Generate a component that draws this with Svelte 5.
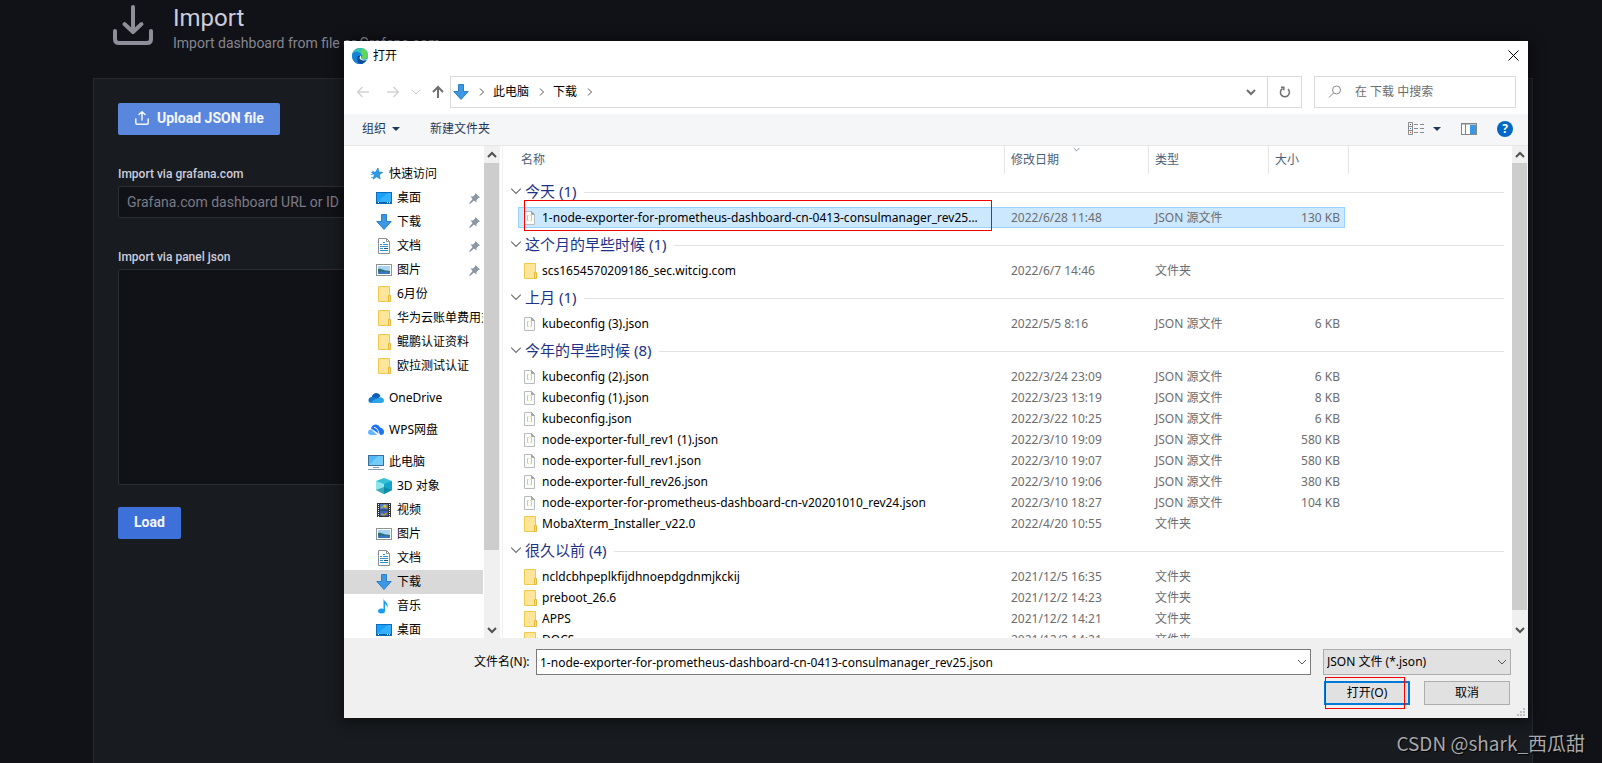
<script>

let jsonType   = "JSON 源文件";
let folderType = "文件夹";

let fileName = "1-node-exporter-for-prometheus-dashboard-cn-0413-consulmanager_rev25.json";
let gnetId   = "";
let panel    = "";
let search   = "";

let tree = [
    {
        "label": "快速访问",
        "icon": "star",
        "items": [
            { "label": "桌面", "icon": "desktop", "pinned": true },
            { "label": "下载", "icon": "download", "pinned": true },
            { "label": "文档", "icon": "document", "pinned": true },
            { "label": "图片", "icon": "picture", "pinned": true },
            { "label": "6月份", "icon": "folder" },
            { "label": "华为云账单费用对比", "icon": "folder" },
            { "label": "鲲鹏认证资料", "icon": "folder" },
            { "label": "欧拉测试认证", "icon": "folder" }
        ]
    },
    { "label": "OneDrive", "icon": "onedrive", "items": [] },
    { "label": "WPS网盘", "icon": "wps", "items": [] },
    {
        "label": "此电脑",
        "icon": "computer",
        "items": [
            { "label": "3D 对象", "icon": "cube" },
            { "label": "视频", "icon": "video" },
            { "label": "图片", "icon": "picture" },
            { "label": "文档", "icon": "document" },
            { "label": "下载", "icon": "download", "selected": true },
            { "label": "音乐", "icon": "music" },
            { "label": "桌面", "icon": "desktop" }
        ]
    }
];

let groups = [
    {
        "label": "今天 (1)",
        "files": [
            {
                "name": "1-node-exporter-for-prometheus-dashboard-cn-0413-consulmanager_rev25...",
                "date": "2022/6/28 11:48",
                "size": "130 KB",
                "selected": true
            }
        ]
    },
    {
        "label": "这个月的早些时候 (1)",
        "files": [
            { "name": "scs1654570209186_sec.witcig.com", "date": "2022/6/7 14:46" }
        ]
    },
    {
        "label": "上月 (1)",
        "files": [
            { "name": "kubeconfig (3).json", "date": "2022/5/5 8:16", "size": "6 KB" }
        ]
    },
    {
        "label": "今年的早些时候 (8)",
        "files": [
            { "name": "kubeconfig (2).json", "date": "2022/3/24 23:09", "size": "6 KB" },
            { "name": "kubeconfig (1).json", "date": "2022/3/23 13:19", "size": "8 KB" },
            { "name": "kubeconfig.json", "date": "2022/3/22 10:25", "size": "6 KB" },
            { "name": "node-exporter-full_rev1 (1).json", "date": "2022/3/10 19:09", "size": "580 KB" },
            { "name": "node-exporter-full_rev1.json", "date": "2022/3/10 19:07", "size": "580 KB" },
            { "name": "node-exporter-full_rev26.json", "date": "2022/3/10 19:06", "size": "380 KB" },
            { "name": "node-exporter-for-prometheus-dashboard-cn-v20201010_rev24.json", "date": "2022/3/10 18:27", "size": "104 KB" },
            { "name": "MobaXterm_Installer_v22.0", "date": "2022/4/20 10:55" }
        ]
    },
    {
        "label": "很久以前 (4)",
        "files": [
            { "name": "ncldcbhpeplkfijdhnoepdgdnmjkckij", "date": "2021/12/5 16:35" },
            { "name": "preboot_26.6", "date": "2021/12/2 14:23" },
            { "name": "APPS", "date": "2021/12/2 14:21" },
            { "name": "DOCS", "date": "2021/12/2 14:21" }
        ]
    }
];

</script>

{#snippet icon(name)}
    <svg class="icon" width="16" height="16" viewBox="0 0 16 16" fill="none" aria-hidden="true">
        {#if name === "star"}
            <path d="M10 2l.8 4 4 .3-3.4 2.400.8 4.300-3.400-2.200-3.800 2.400 1.400-4.400L3.400 6.400l4.300-.3z" fill="#2b9be8" stroke="#1379c4" stroke-width=".6"/>
            <path d="M4 5.5h2M2.500 8.5h3M3 11.5h2" stroke="#5bb8f2"/>
        {:else if name === "desktop"}
            <rect x=".5" y="2.5" width="15" height="11" fill="#18a0fb" stroke="#0a6cbd"/>
            <path d="M1 12L12 3h3v9z" fill="#35b0ff"/>
            <path d="M1 12.5h14" stroke="#0b5f9f"/>
            <path d="M2 12.5h1M11 12.5h1M13 12.5h1" stroke="#fff"/>
        {:else if name === "download"}
            <path d="M5.5.5h5v7h4.700L8 15.5.8 7.5h4.700z" fill="#3c98e4" stroke="#2b7fcc"/>
        {:else if name === "document"}
            <path d="M2.500.5h8l3 3v12h-11z" fill="#fff" stroke="#8b8f94"/>
            <path d="M10.5.5v3h3" stroke="#8b8f94"/>
            <path d="M7 4.5h2M4 6.5h2M7 6.5h5M4 8.5h8M4 10.5h3M4 12.5h8" stroke="#2d8fd0"/>
            <path d="M8 10.5h4" stroke="#30506a"/>
        {:else if name === "picture"}
            <rect x=".5" y="2.5" width="15" height="11" fill="#fff" stroke="#8f9398"/>
            <rect x="2" y="4" width="12" height="8" fill="#a9d4f5"/>
            <path d="M2 7c3-1 5 2 12 2v3H2z" fill="#2f6f78"/>
            <path d="M2 10c4-1 8 0 12 0v2H2z" fill="#3877b8"/>
        {:else if name === "folder"}
            <path d="M2.500.5h11v15h-11z" fill="#ffe59a" stroke="#efc94c"/>
            <path d="M12.500 9.500h2v6h-2z" fill="#ffe08a" stroke="#e5b93a"/>
        {:else if name === "onedrive"}
            <path d="M4 9a4.500 4.500 0 0 1 8.500-3L9 10z" fill="#0f5fb4"/>
            <path d="M3 13a3 3 0 0 1 1-6c2-.5 4 1 7 3l-5 3z" fill="#1479cf"/>
            <path d="M3 13c2-4 5-4 7-5 3-2 6 0 6 2.500 0 1.500-1 2.500-3 2.500z" fill="#2aa5ea"/>
        {:else if name === "wps"}
            <path d="M3 6.500C4 2 10 1 12 5.500 15 6 16 8 16 10s-1 3-3 3z" fill="#1d74f5"/>
            <path d="M0 10.500C0 8 2 7 3.500 7.500L9 13H3c-2 0-3-1-3-2.500z" fill="#67b7ff"/>
            <path d="M6 5.500c3 0 5 4 5 7.500" stroke="#fff"/>
        {:else if name === "computer"}
            <rect x=".5" y="1.5" width="15" height="10" fill="#4db8f5" stroke="#3d6f96"/>
            <path d="M1 11l9-9h5v9z" fill="#74ccfa"/>
            <path d="M5 13.5h6M0 15.5h16" stroke="#8b9db3"/>
        {:else if name === "cube"}
            <path d="M8 0l8 3v9l-8 4-8-4V3z" fill="#35c0d6"/>
            <path d="M0 3l8 3v10l-8-4z" fill="#8fe5ee"/>
            <path d="M8 6l8-3v9l-8 4z" fill="#12a4cb"/>
            <path d="M0 12l8-3 8 3-8 4z" fill="#087f92" opacity=".6"/>
        {:else if name === "video"}
            <rect x="1" y="1" width="14" height="14" fill="#333"/>
            <rect x="4" y="2" width="8" height="5.5" fill="#467ed0"/>
            <rect x="4" y="8.5" width="8" height="5.5" fill="#3769c0"/>
            <path d="M2.500 2v13M13.500 2v13" stroke="#fff" stroke-dasharray="1 1"/>
            <path d="M5 6l3-2 3 2M5 12l3 1 3-2" stroke="#d19a30" stroke-width="1.5"/>
            <circle cx="9" cy="4" r="1.5" fill="#e8c537"/>
        {:else if name === "music"}
            <path d="M7.500 0c0 4 5.500 4 4 10-.5-2-1.500-3.500-2.500-4v7H7.500z" fill="#1a9cf0"/>
            <ellipse cx="5.500" cy="13" rx="3.500" ry="2.500" fill="#1a9cf0"/>
        {:else if name === "json"}
            <path d="M2.500 1.500h7l3 3v10h-10z" fill="#fafbfb" stroke="#b9bcbf"/>
            <path d="M9.500 1.500v3h3z" fill="#a3a7ab" stroke="#a3a7ab"/>
            <path d="M6.500 5.500h-1v5h1M8.500 5.500h1v5h-1" stroke="#d0d07a"/>
        {/if}
    </svg>
{/snippet}

{#snippet chevron(dir)}
    <svg class="chevron {dir}" width="10" height="10" viewBox="0 0 10 10" fill="none" stroke="currentColor" aria-hidden="true">
        {#if dir === "right"}
            <path d="M3 1.500L6.500 5 3 8.500"/>
        {:else if dir === "up"}
            <path d="M1 7l4-4 4 4"/>
        {:else}
            <path d="M1 3l4 4 4-4"/>
        {/if}
    </svg>
{/snippet}

{#snippet scrollbar(name)}
    <div class="scrollbar {name}">
        <button type="button" aria-label="向上滚动">{@render chevron("up")}</button>
        <div class="track"><div class="thumb"></div></div>
        <button type="button" aria-label="向下滚动">{@render chevron("down")}</button>
    </div>
{/snippet}

<div class="page">
    <main>
        <header class="page-header">
            <svg width="40" height="40" viewBox="0 0 40 40" fill="none" stroke="#8e8e99" stroke-width="4" stroke-linecap="round" stroke-linejoin="round" aria-hidden="true">
                <path d="M20 2v24M11.500 19L20 27l8.500-8M2 26v8q0 4 4 4h28q4 0 4-4v-8"/>
            </svg>
            <div>
                <h1>Import</h1>
                <p>Import dashboard from file or Grafana.com</p>
            </div>
        </header>

        <section class="panel">
            <button type="button" class="primary upload">
                <svg width="16" height="16" viewBox="0 0 16 16" fill="none" stroke="currentColor" stroke-width="1.5" stroke-linecap="round" stroke-linejoin="round" aria-hidden="true">
                    <path d="M8 10V2M5 4.500L8 1.800l3 2.700M1.800 9v4q0 1.200 1.200 1.200h10q1.200 0 1.200-1.200V9"/>
                </svg>
                Upload JSON file
            </button>

            <label for="gnet">Import via grafana.com</label>
            <input id="gnet" type="text" placeholder="Grafana.com dashboard URL or ID" bind:value={gnetId}>

            <label for="panel-json">Import via panel json</label>
            <textarea id="panel-json" bind:value={panel}></textarea>

            <button type="button" class="primary">Load</button>
        </section>
    </main>

    <div class="dialog" role="dialog" aria-labelledby="dialog-title">
        <div class="titlebar">
            <svg width="16" height="16" viewBox="0 0 16 16" aria-hidden="true">
                <circle cx="8" cy="8" r="8" fill="#1b8fdc"/>
                <path d="M.3 6C1.500 2 5 0 8 0c5 0 8 3.500 8 7 0 3-2 4.300-4.500 4.300-2 0-2.500-.8-2-1.500C10.500 8 9.500 5 6 5 3.500 5 1.300 5.500.3 6z" fill="#35c2b4"/>
                <path d="M10 .3c3.500.7 6 3.500 6 6.700 0 3-2 4.300-4.500 4.300-2 0-2.500-.8-2-1.500 1.500-2 1-4-1-5z" fill="#5fd65a"/>
                <path d="M.3 6C2 3 8 3 9.500 7c.3 1 .2 2-.2 2.600C8 7 5 8 5 11c0 2.500 2 4.500 4.500 4.800C4 17-1 12 .3 6z" fill="#1583d8"/>
                <path d="M5 11c0-3 2-3.500 3-3-.5 3.500 3 5 6.500 3.800C13 14.500 11 16 9 16c-2 0-4-2.500-4-5z" fill="#0d4b94"/>
                <path d="M8.500 7.500c1.200 1.500 0 2.500 1 3.500 1.500 1.300 4 .8 5.500 0l-.6 1C11 13 8 12 7.500 10z" fill="#fff"/>
            </svg>
            <span id="dialog-title">打开</span>
            <button type="button" class="close" aria-label="关闭">
                <svg width="11" height="11" viewBox="0 0 11 11" stroke="#000" aria-hidden="true"><path d="M.5.5l10 10M10.500.5l-10 10"/></svg>
            </button>
        </div>

        <div class="navbar">
            <div class="history">
                <button type="button" aria-label="后退" disabled>
                    <svg width="14" height="14" viewBox="0 0 14 14" fill="none" stroke="#d3d3d3" stroke-width="1.5" aria-hidden="true"><path d="M13 7H2M6.500 2L1.500 7l5 5"/></svg>
                </button>
                <button type="button" aria-label="前进" disabled>
                    <svg width="14" height="14" viewBox="0 0 14 14" fill="none" stroke="#d3d3d3" stroke-width="1.5" aria-hidden="true"><path d="M1 7h11M7.500 2l5 5-5 5"/></svg>
                </button>
                <button type="button" class="recent" aria-label="最近的位置" disabled>{@render chevron("down")}</button>
                <button type="button" aria-label="上移">
                    <svg width="14" height="14" viewBox="0 0 14 14" fill="none" stroke="#6f6f6f" stroke-width="2" aria-hidden="true"><path d="M7 13V2M2 7l5-5 5 5"/></svg>
                </button>
            </div>
            <div class="address">
                {@render icon("download")}
                {@render chevron("right")}
                <button type="button">此电脑</button>
                {@render chevron("right")}
                <button type="button">下载</button>
                {@render chevron("right")}
                <button type="button" class="expand" aria-label="以前的位置">{@render chevron("down")}</button>
                <button type="button" class="refresh" aria-label="刷新">
                    <svg width="12" height="12" viewBox="0 0 12 12" fill="none" stroke="#6f6f6f" stroke-width="1.5" aria-hidden="true"><path d="M3.500 2.500A4.500 4.500 0 1 0 9 3M2 1.200h2.800v3"/></svg>
                </button>
            </div>
            <label class="search">
                <svg width="14" height="14" viewBox="0 0 14 14" fill="none" stroke="#8a8a8a" aria-hidden="true"><circle cx="8.500" cy="5" r="4"/><path d="M5.500 8L1 12.500"/></svg>
                <input type="text" aria-label="搜索" placeholder="在 下载 中搜索" bind:value={search}>
            </label>
        </div>

        <div class="toolbar">
            <button type="button">组织 <i class="caret"></i></button>
            <button type="button">新建文件夹</button>
            <button type="button" class="view" aria-label="更改视图">
                <svg width="17" height="14" viewBox="0 0 17 14" fill="none" aria-hidden="true">
                    <path d="M.5.5h4v12h-4zM.5 4.500h4M.5 8.500h4" stroke="#8d8d8d"/>
                    <path d="M2 2.500h1" stroke="#555"/><path d="M2 6.500h1" stroke="#2b83d6"/><path d="M2 10.500h1" stroke="#d33"/>
                    <path d="M6 2.500h4M12 2.500h4M6 6.500h4M12 6.500h4M6 10.500h4M12 10.500h4" stroke="#8d8d8d"/>
                </svg>
                <i class="caret"></i>
            </button>
            <button type="button" aria-label="显示预览窗格">
                <svg width="16" height="12" viewBox="0 0 16 12" fill="none" aria-hidden="true">
                    <rect x=".5" y=".5" width="15" height="11" fill="#fff" stroke="#80868c"/>
                    <path d="M4.500 1v10M0 1h16" stroke="#80868c"/>
                    <path d="M9 2h6v9H9z" fill="#3b97e3"/>
                </svg>
            </button>
            <button type="button" class="help" aria-label="获取帮助">?</button>
        </div>

        <div class="body">
            <nav>
                <ul>
                    {#each tree as node}
                        <li>
                            <a href="#top">{@render icon(node.icon)}{node.label}</a>
                            {#if node.items.length > 0}
                                <ul>
                                    {#each node.items as item}
                                        <li>
                                            <a href="#top" class:selected={item.selected}>
                                                {@render icon(item.icon)}<span>{item.label}</span>
                                                {#if item.pinned}
                                                    <svg class="pin" width="11" height="11" viewBox="0 0 11 11" aria-hidden="true"><path d="M6.500 0L11 4.500 9.500 5 7.500 7v2.500L5 7.500 1 11 0 10.500 3.500 6 1.500 3.500H4l2-2z" fill="#8996a3"/></svg>
                                                {/if}
                                            </a>
                                        </li>
                                    {/each}
                                </ul>
                            {/if}
                        </li>
                    {/each}
                </ul>
            </nav>
            {@render scrollbar("tree-scroll")}

            <div class="files">
                <table>
                    <colgroup>
                        <col class="col-gutter"><col><col class="col-date"><col class="col-type"><col class="col-size"><col class="col-rest">
                    </colgroup>
                    <thead>
                        <tr>
                            <td></td>
                            <th><div class="first">名称</div></th>
                            <th><div>修改日期<span class="sort">{@render chevron("down")}</span></div></th>
                            <th><div>类型</div></th>
                            <th><div>大小</div></th>
                            <td><div class="edge"></div></td>
                        </tr>
                    </thead>
                    {#each groups as group}
                        <tbody>
                            <tr class="group">
                                <th colspan="6"><div>{@render chevron("down")}<span>{group.label}</span></div></th>
                            </tr>
                            {#each group.files as file}
                                <tr class="file" class:selected={file.selected}>
                                    <td></td>
                                    <td class="name">
                                        <div>{@render icon(file.size ? "json" : "folder")}<span>{file.name}</span></div>
                                        {#if file.selected}<i class="mark"></i>{/if}
                                    </td>
                                    <td class="date">{file.date}</td>
                                    <td class="type">{file.size ? jsonType : folderType}</td>
                                    <td class="size">{file.size ?? ""}</td>
                                    <td></td>
                                </tr>
                            {/each}
                        </tbody>
                    {/each}
                </table>
            </div>
            {@render scrollbar("file-scroll")}
        </div>

        <div class="footer">
            <div class="fields">
                <label for="filename">文件名(N):</label>
                <div class="combo">
                    <input id="filename" type="text" bind:value={fileName}>
                    {@render chevron("down")}
                </div>
                <div class="combo filter">
                    <select aria-label="文件类型">
                        <option>JSON 文件 (*.json)</option>
                    </select>
                    {@render chevron("down")}
                </div>
            </div>
            <div class="actions">
                <div class="open">
                    <button type="button" class="default">打开(O)</button>
                    <i class="mark"></i>
                </div>
                <button type="button">取消</button>
            </div>
            <svg class="grip" width="8" height="8" viewBox="0 0 8 8" fill="#bfbfbf" aria-hidden="true">
                <path d="M6 0h2v2H6zM3 3h2v2H3zM6 3h2v2H6zM0 6h2v2H0zM3 6h2v2H3zM6 6h2v2H6z"/>
            </svg>
        </div>
    </div>

    <div class="watermark">CSDN @shark_西瓜甜</div>
</div>

<style>

:global(body) {
    margin: 0;
    background: #111217;
}

.page,
.page * {
    box-sizing: border-box;
}

.page {
    position: relative;
    height: 100vh;
    overflow: hidden;
    font-family: "Roboto", "Noto Sans CJK SC", sans-serif;
    color: #ccccdc;
    background: #111217;
}

button,
input,
select,
textarea {
    margin: 0;
    padding: 0;
    font: inherit;
    color: inherit;
    background: none;
    border: none;
    border-radius: 0;
    outline: none;
}

svg {
    display: block;
    flex: none;
}

main {
    display: flex;
    flex-direction: column;
    height: 100%;
    padding: 0 69px 0 93px;
}

.page-header {
    display: flex;
    gap: 20px;
    height: 78px;
    padding: 5px 20px 0;
}

h1 {
    margin: 0;
    font-size: 24px;
    font-weight: 400;
    line-height: 26px;
}

.page-header p {
    margin: 0;
    font-size: 14px;
    line-height: 24px;
    color: #85858f;
}

.panel {
    flex: 1;
    display: flex;
    flex-direction: column;
    align-items: flex-start;
    padding: 24px;
    background: #181b1f;
    border: 1px solid #25282d;
    border-bottom: none;
}

.panel label {
    margin-bottom: 4px;
    font-size: 12px;
    font-weight: 500;
    line-height: 16px;
}

.panel input,
.panel textarea {
    width: 100%;
    max-width: 600px;
    padding: 0 8px;
    font-size: 14px;
    background: #111217;
    border: 1px solid #2d2e34;
    border-radius: 2px;
}

.panel input {
    height: 32px;
    margin-bottom: 31px;
}

.panel input::placeholder {
    color: #7b7b86;
    opacity: 1;
}

.panel textarea {
    height: 216px;
    margin-bottom: 22px;
    resize: none;
}

.primary {
    height: 32px;
    padding: 0 16px 2px;
    display: flex;
    align-items: center;
    gap: 7px;
    font-size: 14px;
    font-weight: 700;
    color: #f4f6fc;
    background: #3d71d9;
    border-radius: 2px;
}

.upload {
    margin-bottom: 31px;
    background: #5a87de;
}

/* file dialog */

.dialog {
    position: absolute;
    top: 41px;
    right: 74px;
    bottom: 45px;
    left: 344px;
    display: flex;
    flex-direction: column;
    font-family: "Noto Sans", "Noto Sans CJK SC", sans-serif;
    font-size: 12px;
    line-height: 20px;
    color: #000000;
    background: #ffffff;
    box-shadow: 0 2px 12px 2px rgba(0, 0, 0, 0.5);
}

.titlebar {
    display: flex;
    align-items: center;
    gap: 5px;
    height: 28px;
    padding: 1px 9px 0 8px;
}

.close {
    margin-left: auto;
}

.navbar {
    display: flex;
    align-items: center;
    gap: 12px;
    height: 45px;
    padding: 0 12px;
}

.history {
    display: flex;
    align-items: center;
    width: 82px;
    gap: 16px;
}

.history .recent {
    margin: 0 -6px 0 -5px;
    color: #c8c8c8;
}

.address {
    flex: 1;
    display: flex;
    align-items: center;
    height: 32px;
    padding-left: 2px;
    border: 1px solid #d9d9d9;
}

.address .right {
    margin: 0 6px 0 8px;
    color: #555555;
}

.address .expand {
    margin: 0 11px 0 auto;
    color: #6f6f6f;
    stroke-width: 2;
}

.refresh {
    display: flex;
    align-items: center;
    justify-content: center;
    width: 34px;
    height: 100%;
    border-left: 1px solid #d9d9d9;
}

.search {
    display: flex;
    align-items: center;
    gap: 13px;
    width: 202px;
    height: 32px;
    padding: 0 13px;
    border: 1px solid #d9d9d9;
}

.search input {
    flex: 1;
    min-width: 0;
}

.search input::placeholder {
    color: #6d6d6d;
    opacity: 1;
}

.toolbar {
    display: flex;
    align-items: center;
    height: 32px;
    padding: 0 15px 1px 18px;
    gap: 20px;
    color: #1e395b;
    background: #f4f6f8;
    border-bottom: 1px solid #e5e6e8;
}

.toolbar button {
    display: flex;
    align-items: center;
    gap: 6px;
}

.toolbar button:first-child {
    margin-right: 10px;
}

.caret {
    border: 4px solid transparent;
    border-top-color: #1e395b;
    border-bottom: none;
}

.toolbar .view {
    gap: 8px;
    margin-left: auto;
}

.toolbar .help {
    justify-content: center;
    width: 16px;
    height: 16px;
    font-size: 12px;
    font-weight: 700;
    color: #ffffff;
    background: #0067c5;
    border-radius: 50%;
}

.body {
    flex: 1;
    display: flex;
    min-height: 0;
}

nav {
    width: 140px;
    padding-top: 16px;
    overflow: hidden;
}

nav ul {
    margin: 0;
    padding: 0;
    list-style: none;
}

nav > ul {
    display: flex;
    flex-direction: column;
    gap: 8px;
}

nav a {
    display: flex;
    align-items: center;
    gap: 5px;
    height: 24px;
    margin-right: 1px;
    padding-left: 24px;
    overflow: hidden;
    white-space: nowrap;
    color: #000000;
    text-decoration: none;
}

nav ul ul a {
    padding-left: 32px;
}

nav a.selected {
    background: #d9d9d9;
}

.pin {
    margin: 0 3px 0 auto;
}

.scrollbar {
    flex: none;
    display: flex;
    flex-direction: column;
    width: 16px;
    background: #f0f0f0;
}

.scrollbar button {
    display: flex;
    align-items: center;
    justify-content: center;
    width: 15px;
    height: 17px;
    color: #505050;
    stroke-width: 2;
}

.track {
    flex: 1;
}

.thumb {
    width: 15px;
    background: #cdcdcd;
}

.tree-scroll .thumb {
    height: 84.5%;
}

.file-scroll .thumb {
    height: 97.6%;
}

.files {
    flex: 1;
    min-width: 0;
    margin-left: 2px;
    overflow: hidden;
    border-left: 1px solid #f0f0f0;
}

table {
    width: 100%;
    table-layout: fixed;
    border-collapse: separate;
    border-spacing: 0;
}

th,
td {
    padding: 0;
    font-weight: 400;
    text-align: left;
    white-space: nowrap;
}

.col-gutter {
    width: 15px;
}

.col-date {
    width: 144px;
}

.col-type {
    width: 120px;
}

.col-size {
    width: 77px;
}

.col-rest {
    width: 167px;
}

thead tr {
    height: 29px;
    vertical-align: top;
}

thead div {
    position: relative;
    height: 28px;
    padding-left: 6px;
    line-height: 28px;
    color: #4c607a;
    border-left: 1px solid #e5e5e5;
}

thead .first {
    padding-left: 3px;
    border: none;
}

thead .edge {
    margin-left: 3px;
}

.sort {
    position: absolute;
    top: 0;
    left: 50%;
}

.sort .chevron {
    width: 7px;
    height: 7px;
    margin-left: -4px;
}

.group div {
    display: flex;
    align-items: center;
    height: 32px;
    padding: 0 8px 0 7px;
    font-size: 15px;
    color: #1e3287;
}

.group .chevron {
    width: 12px;
    height: 12px;
    margin-right: 3px;
    color: #6f6f6f;
}

.group div::after {
    content: "";
    flex: 1;
    height: 1px;
    margin: 2px 0 0 8px;
    background: #e2e2e2;
}

.file td {
    height: 21px;
    color: #6d6d6d;
    line-height: 19px;
    border: 0 solid #99d1ff;
}

.file .name {
    position: relative;
    padding-left: 4px;
    color: #000000;
}

.name div {
    display: flex;
    align-items: center;
    gap: 4px;
    padding-right: 8px;
}

.name span {
    overflow: hidden;
    text-overflow: ellipsis;
}

.file .date,
.file .type {
    padding-left: 7px;
}

.file .size {
    padding-right: 5px;
    text-align: right;
}

.file.selected .name,
.file.selected .date,
.file.selected .type,
.file.selected .size {
    background: #cce8ff;
    border-width: 1px 0;
}

.file.selected .name {
    padding-left: 3px;
    border-left-width: 1px;
}

.file.selected .size {
    padding-right: 4px;
    border-right-width: 1px;
}

/* red frames */

.mark {
    position: absolute;
    z-index: 1;
    border: 1px solid #f40000;
    pointer-events: none;
}

.name .mark {
    top: -8px;
    right: 12px;
    bottom: -4px;
    left: 5px;
}

.open .mark {
    top: -4px;
    right: 5px;
    bottom: -4px;
    left: 1px;
}

.footer {
    position: relative;
    display: flex;
    flex-direction: column;
    gap: 6px;
    padding: 11px 17px 13px 130px;
    background: #f0f0f0;
}

.fields {
    display: flex;
    align-items: center;
}

.fields label {
    width: 62px;
    white-space: nowrap;
}

.combo {
    position: relative;
    flex: 1;
}

.combo input,
.combo select {
    display: block;
    width: 100%;
    height: 26px;
    padding: 0 24px 0 3px;
    background: #ffffff;
    border: 1px solid #7a7a7a;
}

.combo select {
    appearance: none;
    background: #e1e1e1;
    border-color: #adadad;
}

.combo .chevron {
    position: absolute;
    top: 8px;
    right: 4px;
    color: #555555;
    pointer-events: none;
}

.combo.filter {
    flex: 0 0 188px;
    margin-left: 12px;
}

.actions {
    display: flex;
    justify-content: flex-end;
    gap: 14px;
    padding-right: 1px;
}

.actions button {
    display: block;
    width: 86px;
    height: 24px;
    line-height: 20px;
    background: #e1e1e1;
    border: 1px solid #adadad;
}

.actions .default {
    border: 2px solid #0078d7;
}

.open {
    position: relative;
}

.grip {
    position: absolute;
    right: 3px;
    bottom: 2px;
}

.watermark {
    position: absolute;
    right: 17px;
    bottom: 6px;
    font-family: "Noto Sans CJK SC", sans-serif;
    font-size: 19px;
    line-height: 28px;
    color: #a7a8aa;
    text-shadow: 1px 1px 1px #000000;
}

</style>
